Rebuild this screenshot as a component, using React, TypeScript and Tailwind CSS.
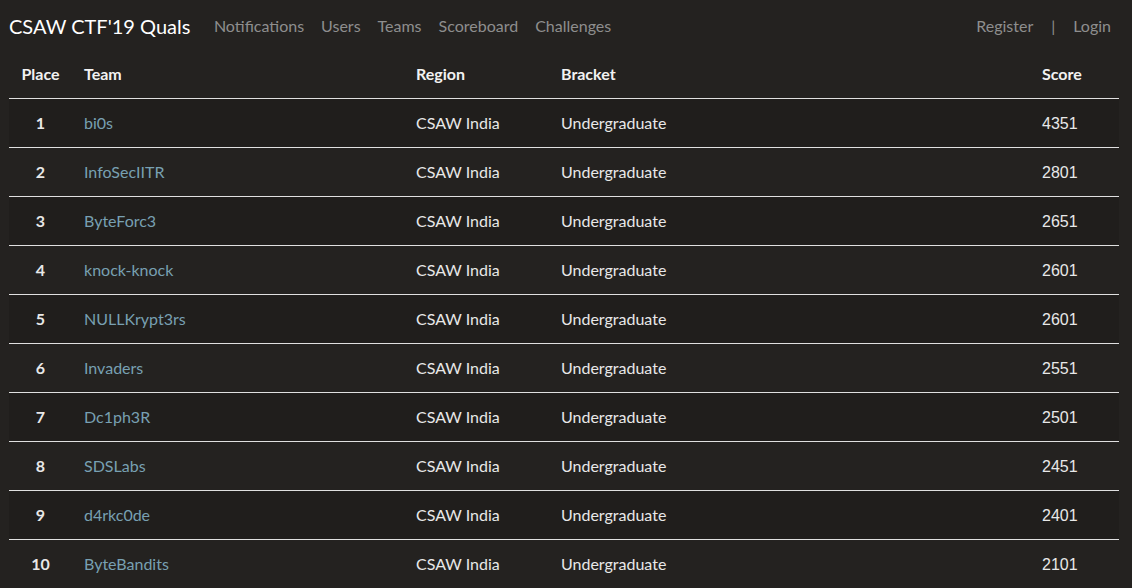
import React from "react";

const rows = [
  [1, "bi0s", 4351],
  [2, "InfoSecIITR", 2801],
  [3, "ByteForc3", 2651],
  [4, "knock-knock", 2601],
  [5, "NULLKrypt3rs", 2601],
  [6, "Invaders", 2551],
  [7, "Dc1ph3R", 2501],
  [8, "SDSLabs", 2451],
  [9, "d4rkc0de", 2401],
  [10, "ByteBandits", 2101],
] as const;

export default function App() {
  return (
    <div className="min-h-[588px] w-full bg-[#242220] text-[#e8e8e8] font-['Lato',sans-serif] overflow-hidden">
      <nav className="h-[54px] flex items-center pl-[9px] pr-[12px] pb-[2px]">
        <span className="text-[20px] text-white mr-[15px] leading-none">CSAW CTF'19 Quals</span>
        <div className="flex text-[16px] text-[#8e8e8e]">
          {["Notifications", "Users", "Teams", "Scoreboard", "Challenges"].map((n) => (
            <span key={n} className="px-[8.5px]">{n}</span>
          ))}
        </div>
        <div className="ml-auto flex items-center text-[16px] text-[#8e8e8e]">
          <span className="px-[9px]">Register</span>
          <span className="px-[9px]">|</span>
          <span className="px-[9px]">Login</span>
        </div>
      </nav>
      <table className="ml-[9px] w-[1110px] border-collapse text-[16px] table-fixed">
        <colgroup>
          <col className="w-[63px]" />
          <col className="w-[332px]" />
          <col className="w-[145px]" />
          <col className="w-[481px]" />
          <col className="w-[89px]" />
        </colgroup>
        <thead>
          <tr className="h-[44px] border-b border-[#e0e0e0] font-bold text-[#f2f2f2]">
            <th className="text-center px-[12px] pb-[4px]">Place</th>
            <th className="text-left px-[12px] pb-[4px]">Team</th>
            <th className="text-left px-[12px] pb-[4px]">Region</th>
            <th className="text-left px-[12px] pb-[4px]">Bracket</th>
            <th className="text-left px-[12px] pb-[4px]">Score</th>
          </tr>
        </thead>
        <tbody>
          {rows.map(([p, t, s], i) => (
            <tr
              key={p}
              className={`h-[49px] ${i < rows.length - 1 ? "border-b border-[#e0e0e0]" : ""} ${i % 2 === 0 ? "bg-[#201e1c]" : ""}`}
            >
              <td className="text-center px-[12px] font-bold">{p}</td>
              <td className="px-[12px] text-[#78a0b2]">{t}</td>
              <td className="px-[12px]">CSAW India</td>
              <td className="px-[12px]">Undergraduate</td>
              <td className="px-[12px] pt-[2px] font-['Liberation_Sans',sans-serif]">{s}</td>
            </tr>
          ))}
        </tbody>
      </table>
    </div>
  );
}
